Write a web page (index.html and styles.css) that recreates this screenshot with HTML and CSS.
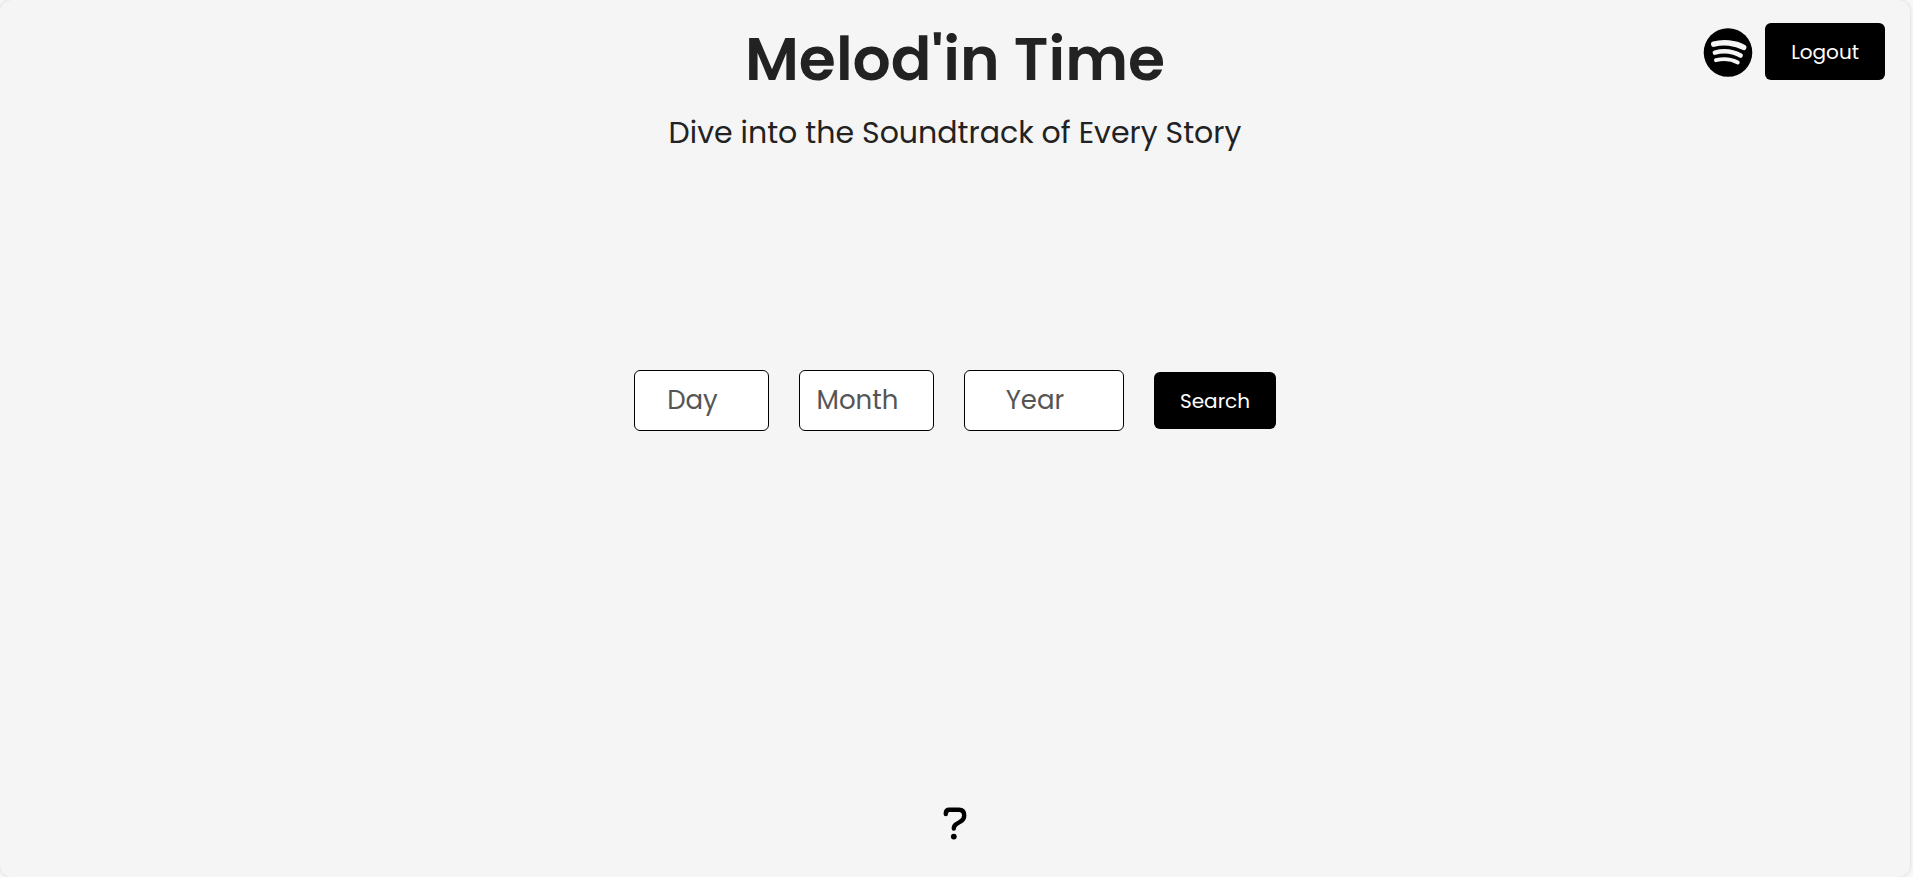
FILE: index.html
```html
<!DOCTYPE html>
<html lang="en">
<head>
<meta charset="utf-8">
<meta name="viewport" content="width=device-width, initial-scale=1">
<title>Melod'in Time</title>
<link rel="stylesheet" href="styles.css">
</head>
<body>
<div class="page">
  <header class="header">
    <div class="heading">
      <h1 class="title">Melod'in Time</h1>
      <p class="tagline">Dive into the Soundtrack of Every Story</p>
    </div>
    <div class="account">
      <svg class="spotify" viewBox="0 0 50 50" role="img" aria-label="Spotify">
        <circle cx="25" cy="25.500" r="24.300" fill="#000"/>
        <g fill="none" stroke="#f5f5f5" stroke-linecap="round">
          <path d="M10.700 17.200C20 14.600 32 15.600 40.700 20.400" stroke-width="5.400"/>
          <path d="M11.900 25.600C20 23.300 30 24.300 37.600 28.500" stroke-width="4.600"/>
          <path d="M12.900 33.200C20 31.500 28.500 32 34.800 35.500" stroke-width="3.800"/>
        </g>
      </svg>
      <button class="button" type="button">Logout</button>
    </div>
  </header>
  <main class="main">
    <form class="search">
      <input class="field" type="text" inputmode="numeric" placeholder="Day" aria-label="Day">
      <input class="field" type="text" inputmode="numeric" placeholder="Month" aria-label="Month">
      <input class="field field-year" type="text" inputmode="numeric" placeholder="Year" aria-label="Year">
      <button class="button" type="submit">Search</button>
    </form>
  </main>
  <footer class="footer">
    <button class="help" type="button" aria-label="Help">
      <svg class="help-icon" viewBox="0 0 24 34" aria-hidden="true">
        <path d="M2.800 7V6.500Q2.800 2.800 6.500 2.800H16Q21.200 2.800 21.200 8.500Q21.200 12.500 17.500 14.500L13.500 17Q10.800 18.500 10.800 21.500" fill="none" stroke="#000" stroke-width="4.400" stroke-linecap="round" stroke-linejoin="round"/>
        <circle cx="10.800" cy="29.600" r="2.900"/>
      </svg>
    </button>
  </footer>
</div>
</body>
</html>
```
FILE: styles.css
```css
* {
  box-sizing: border-box;
}

body {
  margin: 0;
  background: #f8f8f8;
  color: #222;
  font-family: Poppins, Inter, "Open Sans", sans-serif;
}

.page {
  display: flex;
  flex-direction: column;
  min-height: 100vh;
  margin-right: 3px;
  border-radius: 12px;
  background: #f5f5f5;
  box-shadow: 0 0 4px rgba(0, 0, 0, 0.15);
}

.header {
  display: grid;
  grid-template-columns: 1fr auto 1fr;
  align-items: start;
  padding: 23px 25px 0;
}

.heading {
  grid-column: 2;
  text-align: center;
}

.title {
  margin: 0;
  font-size: 60px;
  font-weight: 600;
  line-height: 72px;
}

.tagline {
  margin: 16px 0 0;
  font-size: 30px;
  line-height: 44px;
}

.account {
  display: flex;
  align-items: center;
  justify-content: flex-end;
  gap: 12px;
}

.spotify {
  width: 50px;
  height: 50px;
}

.button {
  height: 57px;
  padding: 0 26px;
  border: 0;
  border-radius: 6px;
  background: #000;
  color: #fff;
  font: inherit;
  font-size: 20px;
}

.main {
  display: flex;
  flex: 1;
  justify-content: center;
  padding-top: 215px;
}

.search {
  display: flex;
  align-items: center;
  align-self: flex-start;
  gap: 30px;
}

.field {
  width: 135px;
  height: 61px;
  padding: 0 30px 0 12px;
  border: 1px solid #000;
  border-radius: 6px;
  background: #fff;
  color: #222;
  font: inherit;
  font-size: 26px;
  text-align: center;
}

.field-year {
  width: 160px;
}

.field::placeholder {
  color: #555;
  opacity: 1;
}

.footer {
  display: flex;
  justify-content: center;
  padding-bottom: 36px;
}

.help {
  display: flex;
  padding: 0;
  border: 0;
  background: none;
}

.help-icon {
  width: 24px;
  height: 34px;
}
```
